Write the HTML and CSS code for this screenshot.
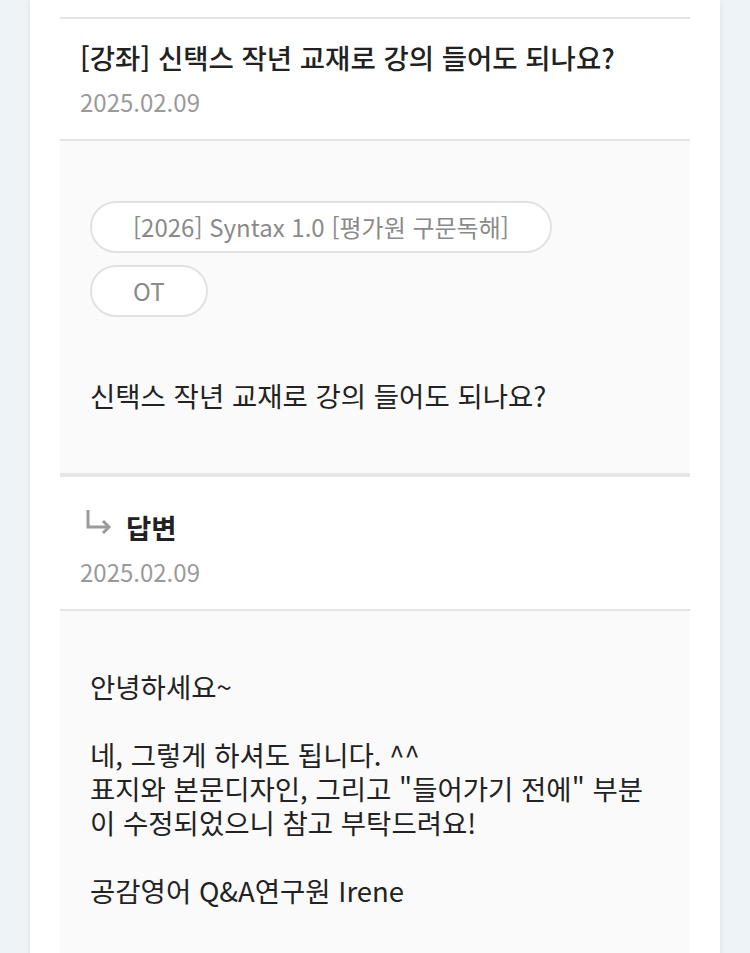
FILE: index.html
```html
<!DOCTYPE html>
<html lang="ko">
<head>
  <meta charset="UTF-8" />
  <meta name="viewport" content="width=device-width, initial-scale=1" />
  <title>Q&amp;A</title>
  <link rel="stylesheet" href="styles.css">
</head>
<body>
  <div class="board">
    <!-- Question -->
    <div class="post-head">
      <h2 class="post-title">[강좌] 신택스 작년 교재로 강의 들어도 되나요?</h2>
      <div class="post-date">2025.02.09</div>
    </div>
    <div class="post-body question">
      <div class="tags">
        <span class="tag">[2026] Syntax 1.0 [평가원 구문독해]</span>
        <span class="tag">OT</span>
      </div>
      <p class="post-text">신택스 작년 교재로 강의 들어도 되나요?</p>
    </div>

    <!-- Answer -->
    <div class="post-head answer-head">
      <h2 class="post-title answer-title">
        <svg class="reply-icon" width="32" height="26" viewBox="0 0 32 26" aria-hidden="true">
          <path d="M8 1v17h20" fill="none" stroke="#9a9a9a" stroke-width="3"/>
          <path d="M23 12l6 6-6 6" fill="none" stroke="#9a9a9a" stroke-width="3"/>
        </svg>
        답변
      </h2>
      <div class="post-date">2025.02.09</div>
    </div>
    <div class="post-body answer">
      <p class="post-text">안녕하세요~<br><br>네, 그렇게 하셔도 됩니다. ^^<br>표지와 본문디자인, 그리고 "들어가기 전에" 부분<br>이 수정되었으니 참고 부탁드려요!<br><br>공감영어 Q&amp;A연구원 Irene</p>
    </div>
  </div>
</body>
</html>
```
FILE: styles.css
```css
body {
  margin: 0;
  background: #eef3f7;
  font-family: "Noto Sans CJK KR", "Noto Sans", sans-serif;
  color: #222;
}

.board {
  background: white;
  margin: 0 30px 0 30px;
  padding: 17px 30px 0;
  min-height: 953px;
  box-sizing: border-box;
  box-shadow: 0 0 6px rgba(0, 0, 0, 0.08);
}

.post-head {
  border-top: 2px solid #e4e4e4;
  border-bottom: 2px solid #e4e4e4;
  padding: 20px 20px 21px;
}

.post-title {
  margin: 0 0 11px;
  font-size: 27.5px;
  line-height: 36px;
  font-weight: 500;
  color: #222;
}

.post-date {
  font-size: 24px;
  line-height: 32px;
  color: #9a9a9a;
}

.post-body {
  background: #fafafa;
  padding: 60px 30px;
}

.question {
  border-bottom: 4px solid #e6e6e6;
}

.tags {
  display: flex;
  flex-direction: column;
  align-items: flex-start;
  gap: 12px;
  margin-bottom: 60px;
}

.tag {
  display: inline-block;
  background: white;
  border: 2px solid #e2e2e2;
  border-radius: 30px;
  padding: 0 41px;
  height: 48px;
  line-height: 48px;
  font-size: 24px;
  color: #8a8a8a;
}

.post-text {
  margin: 0;
  font-size: 27.5px;
  line-height: 36px;
  color: #222;
}

.answer-head {
  border-top: none;
  padding-top: 33px;
}

.answer-title {
  display: flex;
  align-items: center;
  gap: 14px;
  font-weight: 700;
  line-height: 34px;
  margin-bottom: 12px;
}

.reply-icon {
  margin-top: -10px;
}

.answer {
  padding-top: 58px;
}

.answer .post-text {
  line-height: 34px;
}
```
